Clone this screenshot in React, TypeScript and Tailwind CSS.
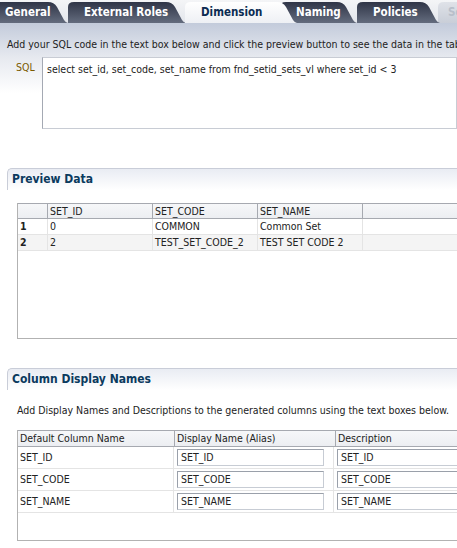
import React from 'react'

const font = { fontFamily: '"DejaVu Sans Condensed", "DejaVu Sans", "Liberation Sans", sans-serif' }

function Tab({ label, w, ml, pl, active, dim, z }: { label: string; w: number; ml: number; pl: number; active?: boolean; dim?: boolean; z: string }) {
  const h = 22
  const d = `M0,${h} L0,6 Q0,1 6,1 L${w - 20},1 Q${w - 14},1 ${w - 11},6 L${w - 4},${h - 3} Q${w - 2},${h} ${w},${h} Z`
  const fill = active ? 'url(#tabActive)' : dim ? 'url(#tabDim)' : 'url(#tabDark)'
  return (
    <div className={`relative h-[22px] shrink-0 ${z}`} style={{ width: w, marginLeft: ml }}>
      <svg className="absolute inset-0" width={w} height={h}>
        <path d={d} fill={fill} />
      </svg>
      <span
        className={`relative block leading-[22px] text-[11.5px] font-bold whitespace-nowrap ${active ? 'text-[#0c2c52]' : dim ? 'text-[#b8bfca]' : 'text-white'}`}
        style={{ paddingLeft: pl }}
      >
        {label}
      </span>
    </div>
  )
}

function SectionHeader({ title }: { title: string }) {
  return (
    <div className="ml-[7px] h-[22px] rounded-tl-[5px] border-t border-l border-[#c9cdd8] bg-gradient-to-b from-[#e9ecf3] to-white pl-[4px]">
      <span className="text-[12px] font-bold leading-[21px] text-[#0b3a5e]">{title}</span>
    </div>
  )
}

export default function App() {
  const preview = [
    ['1', '0', 'COMMON', 'Common Set'],
    ['2', '2', 'TEST_SET_CODE_2', 'TEST SET CODE 2'],
  ]
  const cols = ['SET_ID', 'SET_CODE', 'SET_NAME']
  return (
    <div className="w-[457px] h-[548px] overflow-hidden bg-white text-[10.5px] text-[#222]" style={font}>
      <svg width="0" height="0" className="absolute">
        <defs>
          <linearGradient id="tabDark" x1="0" y1="0" x2="0" y2="1">
            <stop offset="0" stopColor="#2f3547" />
            <stop offset="1" stopColor="#646c7e" />
          </linearGradient>
          <linearGradient id="tabActive" x1="0" y1="0" x2="0" y2="1">
            <stop offset="0" stopColor="#ffffff" />
            <stop offset="1" stopColor="#eef0f4" />
          </linearGradient>
          <linearGradient id="tabDim" x1="0" y1="0" x2="0" y2="1">
            <stop offset="0" stopColor="#dfe2e8" />
            <stop offset="1" stopColor="#c9ced8" />
          </linearGradient>
        </defs>
      </svg>

      {/* tab bar */}
      <div className="flex h-[23px] items-end bg-gradient-to-b from-[#f4f5f7] to-[#e3e6ec]">
        <Tab label="General" w={79} ml={-11} pl={16} z="z-[6]" />
        <Tab label="External Roles" w={118} ml={0} pl={16} z="z-[5]" />
        <Tab label="Dimension" w={112} ml={-1} pl={16} active z="z-[7]" />
        <Tab label="Naming" w={77} ml={-17} pl={16} z="z-[4]" />
        <Tab label="Policies" w={83} ml={0} pl={16} z="z-[3]" />
        <Tab label="Sets" w={60} ml={-2} pl={10} dim z="z-[2]" />
      </div>

      {/* intro band */}
      <div className="h-[34px] bg-gradient-to-b from-[#c3cbdb] to-[#e6e9ef] pl-[7px] pt-[15px] whitespace-nowrap leading-[13px]">
        Add your SQL code in the text box below and click the preview button to see the data in the table
      </div>

      <div className="flex bg-gradient-to-b from-[#e6e9ef] via-white to-white">
        <div className="w-[42px] shrink-0 pl-[16px] pt-[3px] text-[#7a5a00]">SQL</div>
        <div className="h-[72px] flex-1 border border-[#c8ccd4] border-l-[#a4a9b3] bg-white pl-[4px] pt-[4px] whitespace-nowrap">
          select set_id, set_code, set_name from fnd_setid_sets_vl where set_id &lt; 3
        </div>
      </div>

      {/* Preview data */}
      <div className="mt-[39px]">
        <SectionHeader title="Preview Data" />
      </div>
      <div className="ml-[17px] mt-[13px] h-[136px] w-[460px] border-l border-b border-[#b2b2b2]">
        <div className="flex h-[16px] border-t border-b border-[#a6a9b0] bg-gradient-to-b from-[#f6f7f9] to-[#eceef2] leading-[14px]">
          <div className="w-[30px] border-r border-[#a6a9b0]" />
          <div className="w-[105px] border-r border-[#a6a9b0] pl-[2px]">SET_ID</div>
          <div className="w-[105px] border-r border-[#a6a9b0] pl-[2px]">SET_CODE</div>
          <div className="w-[105px] border-r border-[#a6a9b0] pl-[2px]">SET_NAME</div>
          <div className="flex-1" />
        </div>
        {preview.map((r, i) => (
          <div key={i} className={`flex h-[16px] border-b border-[#e4e4e4] leading-[15px] ${i % 2 ? 'bg-[#f4f4f4]' : 'bg-white'}`}>
            <div className="w-[30px] border-r border-[#e4e4e4] pl-[2px] font-bold">{r[0]}</div>
            <div className="w-[105px] border-r border-[#e4e4e4] pl-[2px]">{r[1]}</div>
            <div className="w-[105px] border-r border-[#e4e4e4] pl-[2px]">{r[2]}</div>
            <div className="w-[105px] border-r border-[#e4e4e4] pl-[2px]">{r[3]}</div>
            <div className="flex-1" />
          </div>
        ))}
      </div>

      {/* Column display names */}
      <div className="mt-[29px]">
        <SectionHeader title="Column Display Names" />
      </div>
      <div className="pl-[17px] pt-[14px] whitespace-nowrap leading-[13px]">
        Add Display Names and Descriptions to the generated columns using the text boxes below.
      </div>
      <div className="ml-[17px] mt-[13px] h-[111px] w-[460px] border-l border-b border-[#b2b2b2]">
        <div className="flex h-[17px] border-t border-b border-[#a6a9b0] bg-gradient-to-b from-[#f6f7f9] to-[#eceef2] leading-[15px]">
          <div className="w-[157px] border-r border-[#a6a9b0] pl-[2px]">Default Column Name</div>
          <div className="w-[161px] border-r border-[#a6a9b0] pl-[2px]">Display Name (Alias)</div>
          <div className="flex-1 pl-[2px]">Description</div>
        </div>
        {cols.map((c) => (
          <div key={c} className="flex h-[22px] border-b border-[#e4e4e4] items-center">
            <div className="w-[157px] h-full border-r border-[#e4e4e4] pl-[2px] leading-[21px]">{c}</div>
            <div className="w-[161px] h-full border-r border-[#e4e4e4] pl-[3px] pt-[2px]">
              <div className="h-[17px] w-[147px] border border-[#c7ccd4] border-l-[#9aa0aa] border-t-[#9aa0aa] pl-[3px] leading-[15px]">{c}</div>
            </div>
            <div className="flex-1 h-full pl-[3px] pt-[2px]">
              <div className="h-[17px] w-[140px] border border-[#c7ccd4] border-l-[#9aa0aa] border-t-[#9aa0aa] pl-[3px] leading-[15px]">{c}</div>
            </div>
          </div>
        ))}
      </div>
    </div>
  )
}
